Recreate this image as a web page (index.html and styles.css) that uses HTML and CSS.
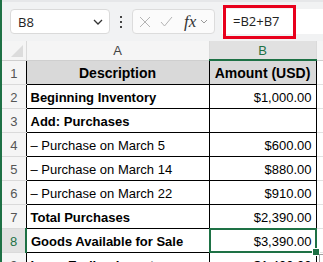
FILE: index.html
```html
<!DOCTYPE html>
<html lang="en">

<head>
    <meta charset="UTF-8" />
    <title>Goods Available for Sale</title>
    <link rel="stylesheet" href="styles.css">
</head>

<body>
    <div class="app">
        <div class="toolbar">
            <div class="namebox">
                <span>B8</span>
                <svg width="10" height="6" viewBox="0 0 10 6"><polyline points="1,1 5,5 9,1" fill="none" stroke="#333" stroke-width="1.3"/></svg>
            </div>
            <div class="dots"><i></i><i></i><i></i></div>
            <div class="fxgroup">
                <svg width="12" height="12" viewBox="0 0 12 12"><path d="M1 1 L11 11 M11 1 L1 11" stroke="#b4b4b4" stroke-width="1"/></svg>
                <svg width="13" height="11" viewBox="0 0 13 11"><polyline points="1,6 4.5,10 12,1" fill="none" stroke="#b4b4b4" stroke-width="1"/></svg>
                <span class="fx">fx</span>
                <svg width="8" height="5" viewBox="0 0 8 5"><polyline points="1,1 4,4 7,1" fill="none" stroke="#999" stroke-width="1"/></svg>
            </div>
            <div class="formula">=B2+B7</div>
            <div class="callout"></div>
        </div>

        <table class="sheet">
            <colgroup>
                <col class="c-rh">
                <col class="c-a">
                <col class="c-b">
                <col>
            </colgroup>
            <tr class="colhead">
                <th class="corner"><span class="tri"></span></th>
                <th>A</th>
                <th class="sel">B</th>
                <th></th>
            </tr>
            <tr>
                <th class="rh">1</th>
                <td class="hd">Description</td>
                <td class="hd">Amount (USD)</td>
                <td class="c"></td>
            </tr>
            <tr>
                <th class="rh">2</th>
                <td class="b">Beginning Inventory</td>
                <td class="num">$1,000.00</td>
                <td class="c"></td>
            </tr>
            <tr>
                <th class="rh">3</th>
                <td class="b">Add: Purchases</td>
                <td class="num"></td>
                <td class="c"></td>
            </tr>
            <tr>
                <th class="rh">4</th>
                <td>– Purchase on March 5</td>
                <td class="num">$600.00</td>
                <td class="c"></td>
            </tr>
            <tr>
                <th class="rh">5</th>
                <td>– Purchase on March 14</td>
                <td class="num">$880.00</td>
                <td class="c"></td>
            </tr>
            <tr>
                <th class="rh">6</th>
                <td>– Purchase on March 22</td>
                <td class="num">$910.00</td>
                <td class="c"></td>
            </tr>
            <tr>
                <th class="rh">7</th>
                <td class="b">Total Purchases</td>
                <td class="num">$2,390.00</td>
                <td class="c"></td>
            </tr>
            <tr>
                <th class="rh sel">8</th>
                <td class="b">Goods Available for Sale</td>
                <td class="num active">$3,390.00<span class="quick"></span></td>
                <td class="c"></td>
            </tr>
            <tr>
                <th class="rh">9</th>
                <td class="b">Less: Ending Inventory</td>
                <td class="num">$1,400.00</td>
                <td class="c"></td>
            </tr>
        </table>
    </div>
</body>

</html>
```

FILE: styles.css
```css
body {
    margin: 0;
    background: #fff;
    font-family: "Liberation Sans", Arial, sans-serif;
    color: #000;
}

.app {
    border-left: 2px solid #1e7145;
    height: 262px;
    overflow: hidden;
}

/* barre de formule */
.toolbar {
    position: relative;
    display: flex;
    align-items: center;
    height: 41px;
    padding-left: 8px;
    background: #f1f2f3;
    border-top: 2px solid #e6e7e9;
    box-sizing: border-box;
}

.namebox {
    display: flex;
    align-items: center;
    justify-content: space-between;
    width: 100px;
    height: 25px;
    box-sizing: border-box;
    padding: 0 6px 0 7px;
    background: #fff;
    border: 1px solid #dadada;
    border-radius: 4px;
    font-family: "Open Sans", sans-serif;
    font-size: 13px;
    color: #222;
}

.dots {
    display: flex;
    flex-direction: column;
    gap: 3px;
    width: 22px;
    align-items: center;
}

.dots i {
    display: block;
    width: 2px;
    height: 2px;
    background: #444;
}

.fxgroup {
    display: flex;
    align-items: center;
    gap: 9px;
    width: 83px;
    height: 25px;
    box-sizing: border-box;
    padding-left: 6px;
    background: #fbfbfb;
    border: 1px solid #dcdcdc;
    border-radius: 4px;
}

.fx {
    font-family: "Liberation Serif", serif;
    font-style: italic;
    font-size: 17px;
    color: #333;
    margin-right: -5px;
    margin-left: 2px;
}

.formula {
    flex: 1;
    height: 25px;
    margin-left: 7px;
    padding-left: 11px;
    line-height: 25px;
    background: #fff;
    font-family: "Open Sans", sans-serif;
    font-size: 13px;
    color: #222;
}

.callout {
    position: absolute;
    left: 221px;
    top: 3px;
    width: 73px;
    height: 34px;
    box-sizing: border-box;
    border: 3.5px solid #e8001c;
}

/* feuille */
.sheet {
    border-collapse: collapse;
    table-layout: fixed;
    width: 340px;
    font-size: 13px;
}

.c-rh {
    width: 24px;
}

.c-a {
    width: 183px;
}

.c-b {
    width: 107px;
}

.colhead {
    height: 18px;
}

.colhead th {
    height: 18px;
    padding: 0;
    line-height: 15px;
    background: #f5f5f5;
    border-right: 1px solid #dadada;
    border-bottom: 1px solid #cfcfcf;
    font-weight: normal;
    color: #444;
    font-size: 13px;
}

.colhead th.sel {
    background: #e1e1e1;
    color: #1e7145;
    border-bottom: 2px solid #1e7145;
}

.corner {
    position: relative;
}

.tri {
    position: absolute;
    right: 3px;
    bottom: 3px;
    width: 0;
    height: 0;
    border-left: 12px solid transparent;
    border-bottom: 12px solid #dcdcdc;
}

tr {
    height: 24px;
}

.rh {
    padding: 3px 0 0;
    line-height: 15px;
    background: #f5f5f5;
    border-bottom: 1px solid #dadada;
    border-right: 1px solid #000;
    font-weight: normal;
    color: #555;
    font-size: 13px;
}

.rh.sel {
    background: #e1e1e1;
    color: #1e7145;
    border-right: 2px solid #1e7145;
}

td {
    height: 24px;
    box-sizing: border-box;
    padding: 3px 4px 0 4px;
    line-height: 15px;
    border: 1px solid #000;
    white-space: nowrap;
}

td.hd {
    background: #d9d9d9;
    text-align: center;
    font-weight: bold;
    font-size: 14px;
}

td.b {
    font-weight: bold;
}

td.num {
    text-align: right;
}

td.c {
    border-left: none;
    border-top: none;
    border-right: 1px solid #e1e1e1;
    border-bottom: 1px solid #e1e1e1;
}

td.active {
    position: relative;
}

td.active::after {
    content: "";
    position: absolute;
    left: -1px;
    top: -1px;
    right: -1px;
    bottom: -1px;
    border: 2px solid #1e7145;
}

td.active::before {
    content: "";
    position: absolute;
    right: -4px;
    bottom: -4px;
    width: 6px;
    height: 6px;
    background: #1e7145;
    border: 1px solid #fff;
    z-index: 1;
}

/* bouton d'analyse rapide, coupé au bord */
.quick {
    position: absolute;
    left: calc(100% + 3px);
    top: calc(100% + 2px);
    width: 12px;
    height: 12px;
    border-top: 1px solid #a0a0a0;
    border-left: 1px solid #a0a0a0;
    background: #fff;
    z-index: 2;
}
```
